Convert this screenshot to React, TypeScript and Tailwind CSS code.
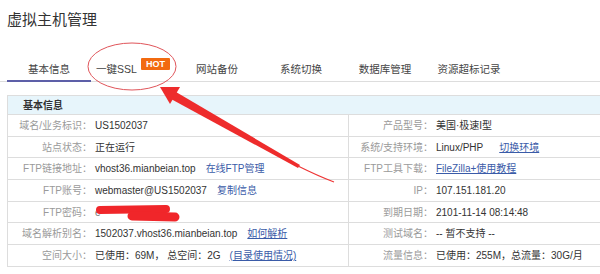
import React from "react";

const tabs = ["基本信息", "一键SSL", "网站备份", "系统切换", "数据库管理", "资源超标记录"];

type Cell = { label: string; value: React.ReactNode };

const link = "ml-[10px] text-[#3a5ba8]";
const linkU = "ml-[10px] text-[#3a5ba8] underline underline-offset-1";

const rows: [Cell, Cell][] = [
  [
    { label: "域名/业务标识：", value: "US1502037" },
    { label: "产品型号：", value: "美国·极速I型" },
  ],
  [
    { label: "站点状态：", value: "正在运行" },
    {
      label: "系统/支持环境：",
      value: (
        <>
          Linux/PHP<span className="ml-[16px] text-[#3a5ba8] underline underline-offset-1">切换环境</span>
        </>
      ),
    },
  ],
  [
    {
      label: "FTP链接地址：",
      value: (
        <>
          vhost36.mianbeian.top<span className={link}>在线FTP管理</span>
        </>
      ),
    },
    {
      label: "FTP工具下载：",
      value: <span className="text-[#3a5ba8] underline underline-offset-1">FileZilla+使用教程</span>,
    },
  ],
  [
    {
      label: "FTP账号：",
      value: (
        <>
          webmaster@US1502037<span className={link}>复制信息</span>
        </>
      ),
    },
    { label: "IP：", value: "107.151.181.20" },
  ],
  [
    { label: "FTP密码：", value: <span className="text-[#777]">e</span> },
    { label: "到期日期：", value: "2101-11-14 08:14:48" },
  ],
  [
    {
      label: "域名解析别名：",
      value: (
        <>
          1502037.vhost36.mianbeian.top<span className={linkU}>如何解析</span>
        </>
      ),
    },
    { label: "测试域名：", value: "-- 暂不支持 --" },
  ],
  [
    {
      label: "空间大小：",
      value: (
        <>
          已使用：69M， 总空间：2G<span className="ml-[9px] text-[#3a5ba8] underline underline-offset-1">(目录使用情况)</span>
        </>
      ),
    },
    { label: "流量信息：", value: "已使用：255M，总流量：30G/月" },
  ],
];

function InfoCell({ cell, divider }: { cell: Cell; divider?: boolean }) {
  return (
    <div className={`flex items-center ${divider ? "border-l border-[#ddd]" : ""}`}>
      <span className="w-[84px] shrink-0 text-right text-[#9a9a9a]">{cell.label}</span>
      <span className="pl-[3px] whitespace-nowrap text-[#333]">{cell.value}</span>
    </div>
  );
}

export default function App() {
  return (
    <div className="relative h-[274px] w-[600px] overflow-hidden bg-white font-['Liberation_Sans','Noto_Sans_CJK_SC',sans-serif]">
      <h1 className="pl-[7px] pt-[10px] text-[15px] leading-[20px] text-[#333]">虚拟主机管理</h1>

      <div className="mt-[29px] flex border-b border-[#ddd] pl-[7px]">
        {tabs.map((t, i) => (
          <div
            key={t}
            className={`-mb-px flex h-[23px] w-[84px] items-center justify-center border-b-2 text-[10.5px] text-[#444] ${
              i === 0 ? "border-[#5d5fa8]" : "border-transparent"
            }`}
          >
            {t}
            {i === 1 && (
              <span className="relative -top-[6px] ml-[4px] rounded-[1px] bg-[#f26a10] px-[5px] text-[9px] font-bold leading-[12px] text-white">
                HOT
              </span>
            )}
          </div>
        ))}
      </div>

      <div className="ml-[7px] mt-[13px] w-[682px] border-x border-t border-[#ddd] text-[10px]">
        <div className="flex h-[19px] items-center border-b border-[#ddd] bg-[#e7f5fb] pl-[15px] font-bold text-[#333]">
          基本信息
        </div>
        {rows.map(([l, r], i) => (
          <div key={i} className="grid h-[21.7px] grid-cols-2 border-b border-[#ddd]">
            <InfoCell cell={l} />
            <InfoCell cell={r} divider />
          </div>
        ))}
      </div>

      <svg className="pointer-events-none absolute left-0 top-0" width="600" height="274">
        <ellipse cx="132" cy="66.5" rx="44" ry="23.5" fill="none" stroke="#e0555a" strokeWidth="1" />
        <polygon points="160,87 180,87 170,104" fill="#ee2c2c" />
        <polygon points="176,92 171,99 298,168 300,165" fill="#ee2c2c" />
        <path d="M298,166 Q318,176 334,182" stroke="#ee3535" strokeWidth="1.2" fill="none" />
        <path d="M100,210 L166,209" stroke="#f0262a" strokeWidth="8" strokeLinecap="round" />
        <path d="M132,216 L175,217" stroke="#f0262a" strokeWidth="9" strokeLinecap="round" />
      </svg>
    </div>
  );
}
